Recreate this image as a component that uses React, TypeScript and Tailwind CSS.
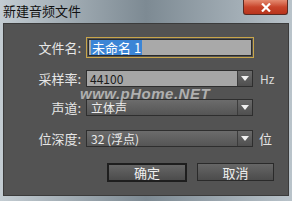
import React from "react";

const font = { fontFamily: '"Noto Sans CJK SC", "Noto Sans", sans-serif' };

const Label = ({ children }: { children: React.ReactNode }) => (
  <div className="w-[79px] shrink-0 pr-[2px] text-right text-[13px] leading-none text-[#e6e6e6]">
    {children}
  </div>
);

const Arrow = () => (
  <div className="flex h-full w-[15px] items-center justify-center border-l border-[#3c3c3c] bg-gradient-to-b from-[#6a6a6a] to-[#4f4f4f]">
    <svg width="8" height="5" viewBox="0 0 8 5">
      <path d="M0 0 H8 L4 5 Z" fill="#f0f0f0" />
    </svg>
  </div>
);

const Select = ({ value, light }: { value: string; light?: boolean }) => (
  <div className="flex h-[17px] w-[167px] items-center border border-[#2e2e2e]">
    <div
      className={
        light
          ? "flex h-full flex-1 items-center bg-[#a6a6a6] pl-[3px] text-[12px] leading-none text-[#1a1a1a]"
          : "flex h-full flex-1 items-center bg-gradient-to-b from-[#6c6c6c] to-[#555555] pl-[4px] text-[12px] leading-none text-[#ececec]"
      }
    >
      {value}
    </div>
    <Arrow />
  </div>
);

export default function App() {
  return (
    <div
      className="relative h-[201px] w-[292px] overflow-hidden bg-gradient-to-r from-[#c3ccd2] via-[#7d8a93] to-[#b9c3ca]"
      style={font}
    >
      <div className="flex h-[23px] items-start justify-between pl-[3px]">
        <span className="mt-[4px] text-[13px] leading-none text-[#111]">新建音频文件</span>
        <div className="mr-[4px] flex h-[15px] w-[45px] items-center justify-center rounded-b-[3px] border border-t-0 border-[#5a2a22] bg-gradient-to-b from-[#e48a70] via-[#c8442a] to-[#b8341c]">
          <svg width="10" height="9" viewBox="0 0 10 9">
            <path d="M1 0.5 L9 8.5 M9 0.5 L1 8.5" stroke="#ffffff" strokeWidth="2.2" />
          </svg>
        </div>
      </div>
      <div className="mx-[3px] flex h-[173px] flex-col border border-[#3b3b3b] bg-[#535353]">
        <div className="mt-[13px] flex items-center">
          <Label>文件名:</Label>
          <div className="ml-[3px] h-[21px] w-[168px] border border-[#c9a64a] p-px">
            <div className="flex h-full items-center border border-[#2a2a2a] bg-[#a9a9a9] pl-[2px]">
              <span className="bg-[#3b85d6] px-px text-[13px] leading-[15px] text-white">未命名 1</span>
            </div>
          </div>
        </div>
        <div className="mt-[12px] flex items-center">
          <Label>采样率:</Label>
          <div className="ml-[3px]">
            <Select value="44100" light />
          </div>
          <span className="ml-[7px] text-[12px] leading-none text-[#dcdcdc]">Hz</span>
        </div>
        <div className="mt-[12px] flex items-center">
          <Label>声道:</Label>
          <div className="ml-[3px]">
            <Select value="立体声" />
          </div>
        </div>
        <div className="mt-[14px] flex items-center">
          <Label>位深度:</Label>
          <div className="ml-[3px]">
            <Select value="32 (浮点)" />
          </div>
          <span className="ml-[6px] text-[13px] leading-none text-[#e6e6e6]">位</span>
        </div>
        <div className="mt-[16px] flex pl-[103px]">
          <button className="flex h-[19px] w-[80px] items-center justify-center border-2 border-[#1e1e1e] bg-gradient-to-b from-[#666666] to-[#4c4c4c] text-[13px] leading-none text-[#f0f0f0]">
            确定
          </button>
          <button className="ml-[10px] flex h-[18px] w-[77px] items-center justify-center border border-[#2a2a2a] bg-gradient-to-b from-[#666666] to-[#4c4c4c] text-[13px] leading-none text-[#f0f0f0]">
            取消
          </button>
        </div>
      </div>
      <div
        className="pointer-events-none absolute left-[80px] top-[86px] text-[15px] font-bold italic leading-none tracking-[0.5px] text-[#d0d0d0]/75"
        style={{ fontFamily: '"Liberation Sans", sans-serif' }}
      >
        www.pHome.NET
      </div>
    </div>
  );
}
